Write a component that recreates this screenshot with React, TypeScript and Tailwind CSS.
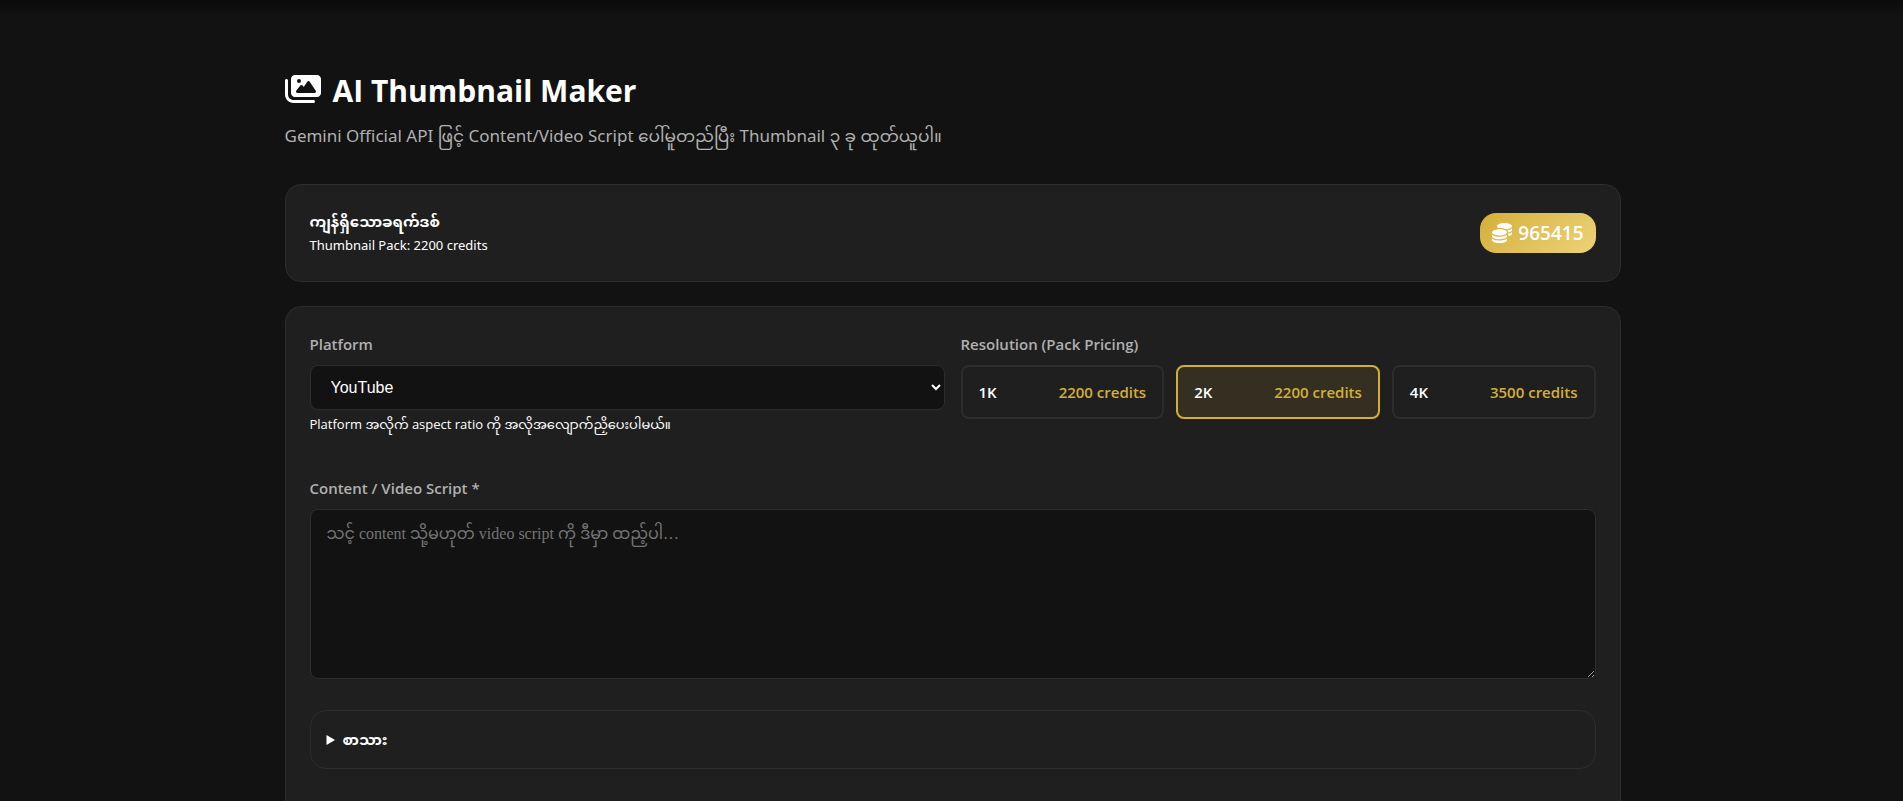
import { useState } from "react";
import { FaCoins, FaImages } from "react-icons/fa6";

const resolutions = [
  { id: "1K", credits: 2200 },
  { id: "2K", credits: 2200 },
  { id: "4K", credits: 3500 },
];

function Header() {
  return (
    <header className="mb-8">
      <h1 className="flex items-center gap-3 text-[30px] leading-[38px] font-bold text-white">
        <FaImages className="-mt-1 h-8 w-9" aria-hidden="true" />
        AI Thumbnail Maker
      </h1>
      <p className="mt-3 pb-[2px] font-['Noto_Sans','Noto_Sans_Myanmar',sans-serif] text-[17px] leading-7 text-[#b0b0b0]">
        Gemini Official API ဖြင့် Content/Video Script ပေါ်မူတည်ပြီး Thumbnail ၃ ခု ထုတ်ယူပါ။
      </p>
    </header>
  );
}

function CreditCard() {
  return (
    <section className="flex h-[98px] items-center justify-between rounded-2xl border border-[#2d2d2d] bg-[#1f1f1f] px-6">
      <div>
        <h2 className="text-[15px] leading-6 font-bold">ကျန်ရှိသောခရက်ဒစ်</h2>
        <p className="font-['Noto_Sans',sans-serif] text-[13px] leading-6">
          Thumbnail Pack: 2200 credits
        </p>
      </div>
      <div className="flex h-10 items-center gap-[6px] rounded-2xl bg-linear-135 from-[#d4af37] to-[#edd377] px-3 text-[19px] font-semibold text-white">
        <FaCoins className="size-5" aria-hidden="true" />
        965415
      </div>
    </section>
  );
}

function ResolutionPicker() {
  const [selected, setSelected] = useState("2K");
  return (
    <fieldset className="min-w-0">
      <legend className="mb-2 text-[15px] leading-[26px] font-semibold text-[#b0b0b0]">
        Resolution (Pack Pricing)
      </legend>
      <div className="grid grid-cols-3 gap-3">
        {resolutions.map((r) => (
          <label
            key={r.id}
            className="flex h-[54px] cursor-pointer items-center justify-between rounded-lg border-2 border-[#2d2d2d] px-4 text-[15px] font-semibold has-checked:border-[#d4af37] has-checked:bg-[#352f22]"
          >
            <input
              type="radio"
              name="resolution"
              value={r.id}
              checked={selected === r.id}
              onChange={() => setSelected(r.id)}
              className="sr-only"
            />
            <span>{r.id}</span>
            <span className="text-[#d4af37]">{r.credits} credits</span>
          </label>
        ))}
      </div>
    </fieldset>
  );
}

export default function App() {
  return (
    <div className="min-h-screen bg-[#121212] pl-[2px] font-['Open_Sans','Noto_Sans_Myanmar',sans-serif] text-white">
      <div className="-ml-[2px] h-4 bg-linear-to-b from-[#0b0b0b] to-[#121212]" />
      <main className="mx-auto max-w-[1400px] px-8 pt-14">
        <Header />
        <CreditCard />
        <form className="mt-6 rounded-2xl border border-[#2d2d2d] bg-[#1f1f1f] p-6">
          <div className="grid grid-cols-2 gap-4">
            <div>
              <label
                htmlFor="platform"
                className="mb-2 block text-[15px] leading-[26px] font-semibold text-[#b0b0b0]"
              >
                Platform
              </label>
              <select
                id="platform"
                className="block h-[45px] w-full rounded-lg border border-[#2d2d2d] bg-[#121212] px-4 font-['Liberation_Sans',sans-serif] text-base text-white"
              >
                <option>YouTube</option>
                <option>Facebook</option>
                <option>TikTok</option>
              </select>
              <p className="mt-1 text-[13px] leading-5">
                Platform အလိုက် aspect ratio ကို အလိုအလျောက်ညှိပေးပါမယ်။
              </p>
            </div>
            <ResolutionPicker />
          </div>

          <label
            htmlFor="script"
            className="mt-[41px] mb-2 block text-[15px] leading-[26px] font-semibold text-[#b0b0b0]"
          >
            Content / Video Script *
          </label>
          <textarea
            id="script"
            placeholder="သင့် content သို့မဟုတ် video script ကို ဒီမှာ ထည့်ပါ…"
            className="block h-[170px] w-full resize rounded-lg border border-[#2d2d2d] bg-[#121212] px-4 py-3 font-['Liberation_Serif','Noto_Sans_Myanmar',serif] text-base text-white placeholder:text-[#757575]"
          />

          <details className="mt-[31px] mb-8 rounded-2xl border border-[#2d2d2d] px-4 py-4">
            <summary className="cursor-pointer text-[15px] leading-[25px] font-bold">စာသား</summary>
            <input
              type="text"
              aria-label="စာသား"
              className="mt-3 h-11 w-full rounded-lg border border-[#2d2d2d] bg-[#121212] px-4"
            />
          </details>
        </form>
      </main>
    </div>
  );
}
